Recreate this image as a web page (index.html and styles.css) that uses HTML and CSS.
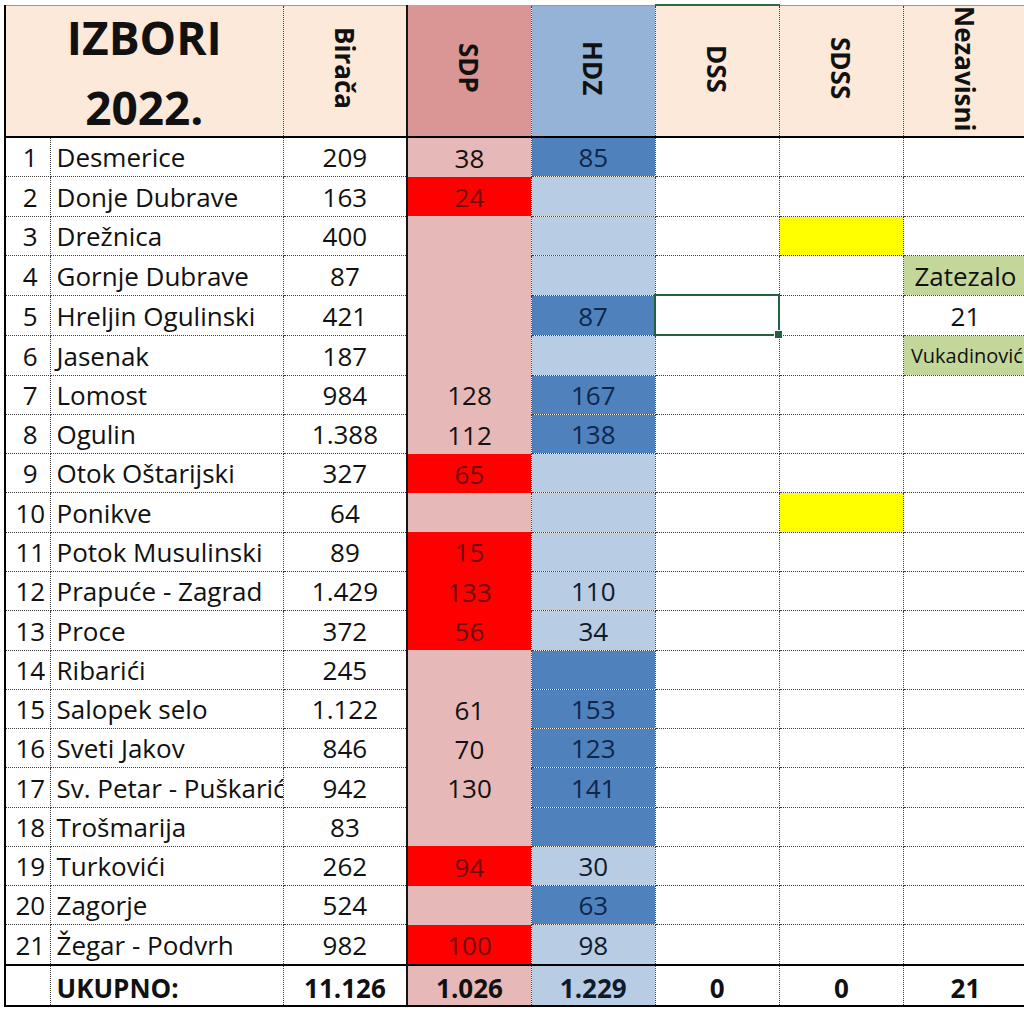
FILE: index.html
```html
<!DOCTYPE html>
<html lang="hr">
<head>
<meta charset="utf-8">
<title>Izbori 2022.</title>
<link rel="stylesheet" href="styles.css">
</head>
<body>
<div class="sheet">
<table class="grid">
<colgroup>
<col class="w-num"><col class="w-name"><col class="w-col"><col class="w-col"><col class="w-col"><col class="w-col"><col class="w-col"><col class="w-col">
</colgroup>
<tr class="head">
  <td colspan="2" class="title first"><div class="tt">IZBORI<br>2022.</div></td>
  <td><span class="vh">Birača</span></td>
  <td class="sdp sdp-h"><span class="vh">SDP</span></td>
  <td class="hdz-h"><span class="vh">HDZ</span></td>
  <td class="dss-h"><span class="vh">DSS</span></td>
  <td><span class="vh">SDSS</span></td>
  <td><span class="vh">Nezavisni</span></td>
</tr>
<tr><td class="num first">1</td><td class="name">Desmerice</td><td>209</td><td class="sdp p">38</td><td class="db">85</td><td></td><td></td><td></td></tr>
<tr><td class="num first">2</td><td class="name">Donje Dubrave</td><td>163</td><td class="sdp r">24</td><td class="lb"></td><td></td><td></td><td></td></tr>
<tr><td class="num first">3</td><td class="name">Drežnica</td><td>400</td><td class="sdp p"></td><td class="lb"></td><td></td><td class="y"></td><td></td></tr>
<tr><td class="num first">4</td><td class="name">Gornje Dubrave</td><td>87</td><td class="sdp p"></td><td class="lb"></td><td></td><td></td><td class="g">Zatezalo</td></tr>
<tr><td class="num first">5</td><td class="name">Hreljin Ogulinski</td><td>421</td><td class="sdp p"></td><td class="db">87</td><td class="sel"><span class="handle"></span></td><td></td><td>21</td></tr>
<tr><td class="num first">6</td><td class="name">Jasenak</td><td>187</td><td class="sdp p"></td><td class="lb"></td><td></td><td></td><td class="g small">Vukadinović</td></tr>
<tr><td class="num first">7</td><td class="name">Lomost</td><td>984</td><td class="sdp p">128</td><td class="db">167</td><td></td><td></td><td></td></tr>
<tr><td class="num first">8</td><td class="name">Ogulin</td><td>1.388</td><td class="sdp p">112</td><td class="db">138</td><td></td><td></td><td></td></tr>
<tr><td class="num first">9</td><td class="name">Otok Oštarijski</td><td>327</td><td class="sdp r">65</td><td class="lb"></td><td></td><td></td><td></td></tr>
<tr><td class="num first">10</td><td class="name">Ponikve</td><td>64</td><td class="sdp p"></td><td class="lb"></td><td></td><td class="y"></td><td></td></tr>
<tr><td class="num first">11</td><td class="name">Potok Musulinski</td><td>89</td><td class="sdp r">15</td><td class="lb"></td><td></td><td></td><td></td></tr>
<tr><td class="num first">12</td><td class="name">Prapuće - Zagrad</td><td>1.429</td><td class="sdp r">133</td><td class="lb">110</td><td></td><td></td><td></td></tr>
<tr><td class="num first">13</td><td class="name">Proce</td><td>372</td><td class="sdp r">56</td><td class="lb">34</td><td></td><td></td><td></td></tr>
<tr><td class="num first">14</td><td class="name">Ribarići</td><td>245</td><td class="sdp p"></td><td class="db"></td><td></td><td></td><td></td></tr>
<tr><td class="num first">15</td><td class="name">Salopek selo</td><td>1.122</td><td class="sdp p">61</td><td class="db">153</td><td></td><td></td><td></td></tr>
<tr><td class="num first">16</td><td class="name">Sveti Jakov</td><td>846</td><td class="sdp p">70</td><td class="db">123</td><td></td><td></td><td></td></tr>
<tr><td class="num first">17</td><td class="name">Sv. Petar - Puškarić</td><td>942</td><td class="sdp p">130</td><td class="db">141</td><td></td><td></td><td></td></tr>
<tr><td class="num first">18</td><td class="name">Trošmarija</td><td>83</td><td class="sdp p"></td><td class="db"></td><td></td><td></td><td></td></tr>
<tr><td class="num first">19</td><td class="name">Turkovići</td><td>262</td><td class="sdp r">94</td><td class="lb">30</td><td></td><td></td><td></td></tr>
<tr><td class="num first">20</td><td class="name">Zagorje</td><td>524</td><td class="sdp p"></td><td class="db">63</td><td></td><td></td><td></td></tr>
<tr><td class="num first">21</td><td class="name">Žegar - Podvrh</td><td>982</td><td class="sdp r">100</td><td class="lb">98</td><td></td><td></td><td></td></tr>
<tr class="total"><td class="num first"></td><td class="name">UKUPNO:</td><td>11.126</td><td class="sdp p">1.026</td><td class="lb">1.229</td><td>0</td><td>0</td><td>21</td></tr>
</table>
</div>
</body>
</html>
```
FILE: styles.css
```css
html, body {
  margin: 0;
  padding: 0;
  background: #ffffff;
  overflow: hidden;
}

body {
  font-family: "Open Sans", "Noto Sans", sans-serif;
  color: #111111;
}

.sheet {
  padding: 4px 0 0 4px;
  width: 1040px;
}

.grid {
  border-collapse: collapse;
  table-layout: fixed;
  width: 1024px;
}

.w-num { width: 45px; }
.w-name { width: 233px; }
.w-col { width: 124px; }

.grid td {
  border: 1px dotted #3c3c3c;
  padding: 0 0 4px 0;
  height: 34.28px;
  font-size: 26px;
  font-weight: 500;
  line-height: 30px;
  text-align: center;
  vertical-align: bottom;
  white-space: nowrap;
  overflow: hidden;
}

.grid td.first {
  border-left: 2px solid #000;
}

.grid td.num {
  padding-left: 5px;
}

.grid td.name {
  text-align: left;
  padding-left: 6px;
}

/* header */
.head td {
  height: 127px;
  padding: 0;
  background: #fde9d9;
  vertical-align: middle;
  border-top: 1px solid #9a9a9a;
  border-bottom: 2px solid #000;
}

.head td.title {
  font-weight: 700;
  font-size: 46px;
  vertical-align: top;
}

.tt {
  line-height: 70px;
  margin: -4px 0 -10px;
}

.head td.dss-h {
  border-top: 2px solid #2b6a47;
}

.vh {
  display: inline-block;
  writing-mode: vertical-rl;
  font-weight: 700;
  font-size: 26px;
  line-height: 30px;
}

/* party columns */
.grid td.sdp {
  border-top: none;
  border-bottom: none;
  border-left: 2px solid #141414;
}

.head td.sdp-h {
  background: #d99694;
  border-bottom: 2px solid #000;
}

.head td.hdz-h {
  background: #95b3d7;
}

.grid td.p { background: #e6b8b7; }
.grid td.r { background: #ff0000; color: #6e0a0a; }
.grid td.lb { background: #b8cce4; color: #111a2a; }
.grid td.db { background: #4f81bd; color: #10264a; }
.grid td.y { background: #ffff00; }
.grid td.g { background: #c4d79b; }

.grid td.small {
  font-size: 20px;
  text-align: left;
  padding-left: 7px;
}

/* selected cell */
.grid td.sel {
  border: 2px solid #22603f;
  position: relative;
  overflow: visible;
}

.handle {
  position: absolute;
  right: -5px;
  bottom: -5px;
  width: 7px;
  height: 7px;
  background: #22603f;
  border: 1px solid #fff;
}

/* total row */
.total td {
  font-weight: 700;
  border-top: 2px solid #000;
  border-bottom: 2px solid #000;
  height: 37px;
  padding-bottom: 2px;
}

.grid .total td.sdp {
  border-top: 2px solid #000;
  border-bottom: 2px solid #000;
}
```
